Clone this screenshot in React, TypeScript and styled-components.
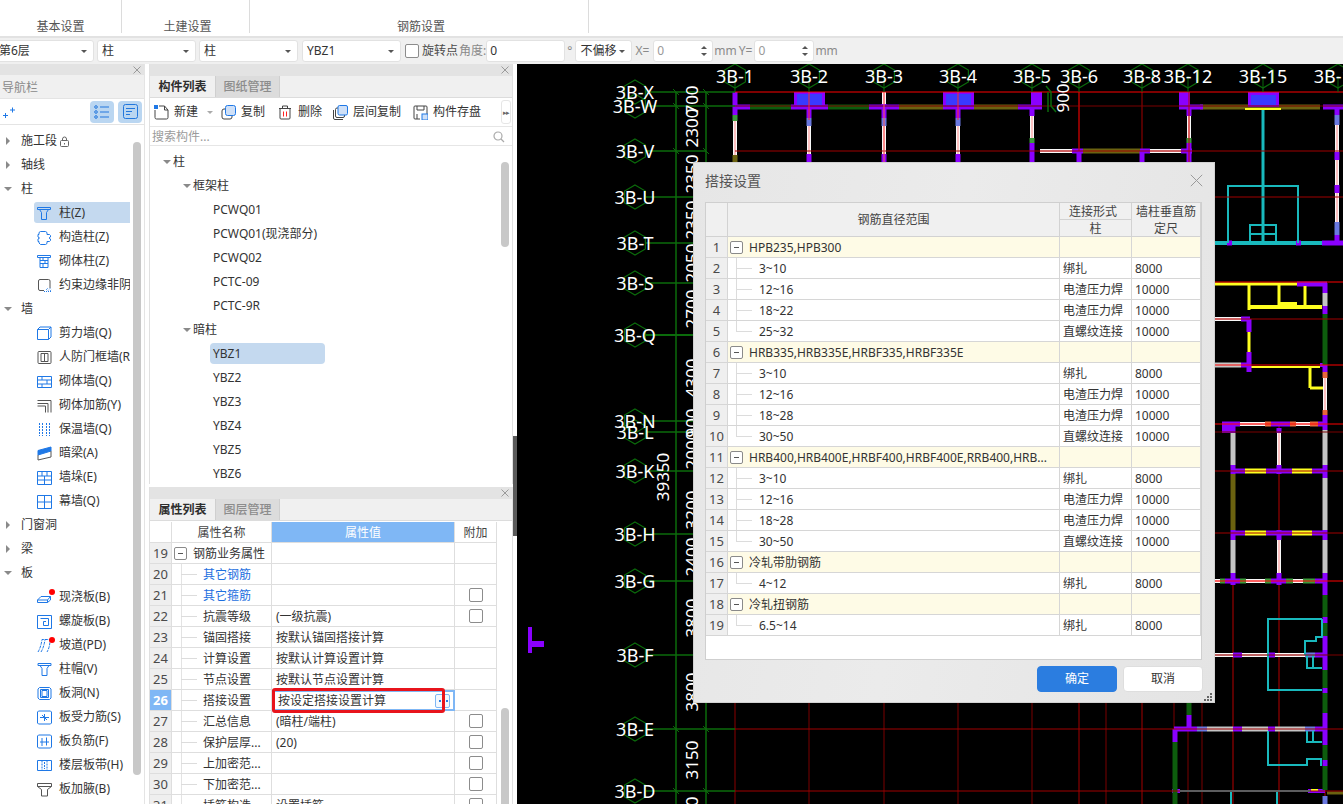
import React from "react";
import styled, { createGlobalStyle } from "styled-components";

const Global = createGlobalStyle`
  html, body { margin: 0; padding: 0; background: #fff; overflow: hidden; }
  #root { width: 1343px; height: 804px; }
  * { box-sizing: border-box; }
`;

const FONT = `"Noto Sans", "Noto Sans CJK SC", sans-serif`;
const BLUE = "#1f78e6";
const GREY = "#555";

/* ---------- shell ---------- */
const Page = styled.div`
  position: relative;
  width: 1343px;
  height: 804px;
  overflow: hidden;
  display: flex;
  flex-direction: column;
  font: 12px/1 ${FONT};
  color: #333;
  background: #fff;
`;
const Ribbon = styled.div`
  height: 38px;
  display: grid;
  grid-template-columns: 122px 128px 339px;
  background: #fff;
  border-bottom: 2px solid #e2e2e2;
`;
const RibbonGroup = styled.div<{ $shift: number }>`
  height: 33px;
  border-right: 1px solid #dcdcdc;
  display: flex;
  align-items: flex-end;
  justify-content: center;
  color: #555;
  padding-left: ${(p) => p.$shift}px;
  line-height: 12px;
`;
const Toolbar = styled.div`
  height: 26px;
  display: flex;
  align-items: center;
  background: #f0f0f0;
  color: #555;
`;
const Select = styled.div<{ $w: number; $ml?: number }>`
  width: ${(p) => p.$w}px;
  height: 22px;
  margin-left: ${(p) => p.$ml ?? 0}px;
  padding: 0 4px;
  display: flex;
  align-items: center;
  justify-content: space-between;
  background: #fff;
  border: 1px solid #e2e2e2;
  border-radius: 3px;
  color: #333;
  font-size: 12px;
`;
const Caret = styled.i<{ $ml?: number; $light?: boolean }>`
  width: 0;
  height: 0;
  margin-right: 2px;
  margin-left: ${(p) => p.$ml ?? 0}px;
  border-left: 3px solid transparent;
  border-right: 3px solid transparent;
  border-top: 3px solid ${(p) => (p.$light ? "#aaa" : "#555")};
`;
const CheckBox = styled.span<{ $ml?: number }>`
  display: inline-block;
  width: 14px;
  height: 14px;
  margin-left: ${(p) => p.$ml ?? 0}px;
  background: #fff;
  border: 1px solid #8c8c8c;
  border-radius: 2px;
  flex: none;
`;
const Label = styled.span<{ $ml?: number; $muted?: boolean }>`
  margin-left: ${(p) => p.$ml ?? 0}px;
  color: ${(p) => (p.$muted ? "#8a8a8a" : "#4a4a4a")};
  white-space: nowrap;
`;
const NumInput = styled.div<{ $w: number; $ml?: number; $muted?: boolean }>`
  width: ${(p) => p.$w}px;
  height: 22px;
  margin-left: ${(p) => p.$ml ?? 0}px;
  padding: 0 3px;
  display: flex;
  align-items: center;
  justify-content: space-between;
  background: #fff;
  border: 1px solid #e2e2e2;
  border-radius: 3px;
  color: ${(p) => (p.$muted ? "#999" : "#333")};
`;
const Spin = styled.span`
  display: flex;
  flex-direction: column;
  gap: 4px;
  margin-right: 2px;
  &::before, &::after {
    content: "";
    width: 0;
    height: 0;
    border-left: 3px solid transparent;
    border-right: 3px solid transparent;
  }
  &::before { border-bottom: 3px solid #555; }
  &::after { border-top: 3px solid #555; }
`;
const Main = styled.div`
  flex: 1;
  min-height: 0;
  display: flex;
  background: #fff;
`;

/* ---------- side panels ---------- */
const CloseStrip = styled.div<{ $h?: number }>`
  height: ${(p) => p.$h ?? 11}px;
  flex: none;
  background: #e3e3e3;
  display: flex;
  align-items: center;
  justify-content: flex-end;
  padding-right: 3px;
  color: #9a9a9a;
`;
const NavPanel = styled.aside`
  position: relative;
  width: 145px;
  flex: none;
  display: flex;
  flex-direction: column;
  border-right: 1px solid #e4e4e4;
  overflow: hidden;
`;
const NavTitle = styled.div`
  height: 23px;
  flex: none;
  display: flex;
  align-items: center;
  padding: 2px 0 0 2px;
  background: #f0f0f0;
  color: #8a8a8a;
`;
const NavTools = styled.div`
  height: 27px;
  flex: none;
  display: flex;
  align-items: center;
  gap: 4px;
  padding: 0 2px;
  border-top: 1px solid #e4e4e4;
  border-bottom: 1px solid #e4e4e4;
`;
const ToolToggle = styled.div`
  width: 24px;
  height: 22px;
  display: flex;
  align-items: center;
  justify-content: center;
  background: #bad6f1;
  border-radius: 4px;
`;
const Spacer = styled.div`
  flex: 1;
`;
const NavTree = styled.div`
  padding-top: 4px;
`;
const NavRow = styled.div`
  height: 24px;
  display: flex;
  align-items: center;
  white-space: nowrap;
  overflow: hidden;
  width: 131px;
`;
const Arrow = styled.i<{ $open?: boolean; $ml: number }>`
  flex: none;
  margin-left: ${(p) => p.$ml}px;
  width: 0;
  height: 0;
  ${(p) =>
    p.$open
      ? `border-left:4px solid transparent;border-right:4px solid transparent;border-top:4px solid #8a8a8a;`
      : `border-top:4px solid transparent;border-bottom:4px solid transparent;border-left:4px solid #8a8a8a;margin-left:${p.$ml + 2}px;margin-right:2px;`}
`;
const NavGroupText = styled.span`
  margin-left: 9px;
`;
const LockIcon = styled.svg`
  margin-left: 3px;
`;
const NavItem = styled.div<{ $active?: boolean }>`
  position: relative;
  height: 24px;
  width: 130px;
  display: flex;
  align-items: center;
  white-space: nowrap;
  overflow: hidden;
  padding-left: 37px;
  &::before {
    content: "";
    position: absolute;
    left: 34px;
    top: 1px;
    bottom: 2px;
    right: 0;
    border-radius: 3px 0 0 3px;
    background: ${(p) => (p.$active ? "#c4d9ef" : "transparent")};
  }
  & > * { position: relative; }
`;
const NavText = styled.span`
  margin-left: 7px;
`;
const Dot = styled.i`
  position: absolute;
  left: 12px;
  top: -1px;
  width: 6px;
  height: 6px;
  border-radius: 50%;
  background: #f00;
`;
const IconWrap = styled.span`
  position: relative;
  width: 15px;
  height: 15px;
  flex: none;
  display: block;
  svg { display: block; }
`;
const ScrollThumb = styled.i<{ $l: number; $t: number; $h: number }>`
  position: absolute;
  left: ${(p) => p.$l}px;
  top: ${(p) => p.$t}px;
  width: 8px;
  height: ${(p) => p.$h}px;
  border-radius: 4px;
  background: #c8c8c8;
`;

const MidColumn = styled.div`
  position: relative;
  width: 364px;
  flex: none;
  margin-left: 4px;
  display: flex;
  flex-direction: column;
  gap: 3px;
`;
const Panel = styled.section<{ $h?: number }>`
  position: relative;
  ${(p) => (p.$h ? `height:${p.$h}px;flex:none;` : "flex:1;min-height:0;")}
  display: flex;
  flex-direction: column;
  overflow: hidden;
  border-left: 1px solid #e0e0e0;
  border-right: 1px solid #e0e0e0;
`;
const TabRow = styled.div`
  height: 22px;
  flex: none;
  display: flex;
  background: #f0f0f0;
  border-bottom: 1px solid #dcdcdc;
`;
const Tab = styled.div<{ $active?: boolean }>`
  width: 65px;
  display: flex;
  align-items: center;
  justify-content: center;
  padding-top: 1px;
  background: ${(p) => (p.$active ? "#f0f0f0" : "#dcdcdc")};
  color: ${(p) => (p.$active ? "#2e2e2e" : "#8c8c8c")};
  font-weight: ${(p) => (p.$active ? 700 : 500)};
  ${(p) => (p.$active ? "" : "border-left:1px solid #cfcfcf;border-right:1px solid #cfcfcf;")}
`;
const ComponentTools = styled.div`
  height: 29px;
  flex: none;
  display: flex;
  align-items: center;
  padding-left: 4px;
  border-bottom: 1px solid #e6e6e6;
`;
const ToolBtn = styled.div<{ $ml?: number }>`
  display: flex;
  align-items: center;
  gap: 5px;
  margin-left: ${(p) => p.$ml ?? 0}px;
  color: #333;
  white-space: nowrap;
`;
const MoreBtn = styled.div`
  width: 10px;
  height: 24px;
  margin-left: 20px;
  display: flex;
  align-items: center;
  justify-content: center;
  border: 1px solid #e6e6e6;
  border-radius: 3px;
  color: #666;
  font-size: 7px;
  letter-spacing: -1px;
`;
const Search = styled.div`
  height: 19px;
  flex: none;
  display: flex;
  align-items: center;
  justify-content: space-between;
  padding: 1px 7px 0 2px;
  color: #9b9b9b;
  border-bottom: 1px solid #e6e6e6;
`;
const ComponentTree = styled.div`
  padding-top: 4px;
`;
const TreeRow = styled.div<{ $indent: number }>`
  height: 24px;
  display: flex;
  align-items: center;
  padding-left: ${(p) => p.$indent}px;
`;
const TreeLabel = styled.span`
  margin-left: 2px;
`;
const LeafRow = styled.div<{ $selected?: boolean }>`
  height: 24px;
  display: flex;
  align-items: center;
  padding-left: 63px;
  position: relative;
  &::before {
    content: "";
    position: absolute;
    left: 60px;
    top: 1px;
    bottom: 2px;
    width: 115px;
    border-radius: 4px;
    background: ${(p) => (p.$selected ? "#c4d9ef" : "transparent")};
  }
  & > span { position: relative; }
`;

/* ---------- property table ---------- */
const PropGrid = styled.div`
  width: 347px;
  display: grid;
  grid-template-columns: 22px 100px 183px 42px;
  grid-auto-rows: 21px;
  margin-top: 1px;
`;
const Cell = styled.div`
  display: flex;
  align-items: center;
  padding: 1px 0 0 4px;
  border-right: 1px solid #dedede;
  border-bottom: 1px solid #dedede;
  white-space: nowrap;
  overflow: hidden;
  color: #333;
`;
const HeadCell = styled(Cell)<{ $on?: boolean }>`
  justify-content: center;
  padding: 1px 0 0;
  background: ${(p) => (p.$on ? "#7fb7f5" : "#fff")};
  color: ${(p) => (p.$on ? "#fff" : "#444")};
`;
const NumCell = styled(Cell)<{ $on?: boolean }>`
  justify-content: center;
  padding: 1px 0 0;
  font-size: 13px;
  background: ${(p) => (p.$on ? "#7fb7f5" : "#efefef")};
  color: ${(p) => (p.$on ? "#fff" : "#4a4a4a")};
  font-weight: ${(p) => (p.$on ? 700 : 400)};
`;
const NameCell = styled(Cell)<{ $link?: boolean }>`
  position: relative;
  padding-left: 31px;
  color: ${(p) => (p.$link ? "#1d6fe0" : "#333")};
  &::before {
    content: "";
    position: absolute;
    left: 9px;
    top: 0;
    bottom: 0;
    width: 1px;
    background: #e3e3e3;
  }
  &::after {
    content: "";
    position: absolute;
    left: 9px;
    top: 10px;
    width: 16px;
    height: 1px;
    background: #dcdcdc;
  }
`;
const GroupCell = styled(Cell)`
  padding-left: 2px;
  gap: 6px;
`;
const MinusBox = styled.span`
  flex: none;
  width: 13px;
  height: 13px;
  display: flex;
  align-items: center;
  justify-content: center;
  background: #fff;
  border: 1px solid #8a8a8a;
  border-radius: 2px;
  &::before {
    content: "";
    width: 5px;
    height: 1px;
    background: #555;
  }
`;
const AddCell = styled(Cell)`
  padding: 0;
  justify-content: center;
`;
const EditCell = styled(Cell)`
  position: relative;
  border: 2px solid #7fb7f5;
  padding: 1px 3px 0 4px;
  overflow: visible;
  justify-content: space-between;
`;
const DotsBtn = styled.span`
  position: relative;
  width: 15px;
  height: 14px;
  display: flex;
  align-items: center;
  justify-content: center;
  background: #f3f8fe;
  border: 1px solid #7fb7f5;
  border-radius: 2px;
  &::before {
    content: "";
    width: 2px;
    height: 2px;
    margin-left: -6px;
    background: #2a7de0;
    box-shadow: 7px 0 0 #2a7de0;
  }
`;
const RedMark = styled.i`
  position: absolute;
  left: -2px;
  top: -4px;
  width: 173px;
  height: 25px;
  border: 3px solid #e8141c;
  border-radius: 3px;
  pointer-events: none;
`;
const Splitter = styled.i`
  position: absolute;
  left: 513px;
  top: 436px;
  width: 4px;
  height: 100px;
  background: #5a5a5a;
`;

/* ---------- canvas ---------- */
const Canvas = styled.main`
  flex: 1;
  margin-left: 4px;
  background: #000;
  overflow: hidden;
  svg { display: block; }
`;

/* ---------- dialog ---------- */
const Dialog = styled.div`
  position: absolute;
  left: 693px;
  top: 162px;
  width: 522px;
  height: 541px;
  padding: 0 12px;
  display: flex;
  flex-direction: column;
  background: linear-gradient(100deg, #e6e6e6, #ebebeb 45%, #e4e4e4);
  border: 1px solid #d2d2d2;
  z-index: 2;
`;
const DialogHead = styled.div`
  height: 39px;
  flex: none;
  margin: 0 -1px;
  padding-bottom: 4px;
  display: flex;
  align-items: center;
  justify-content: space-between;
  color: #555;
  font-size: 14px;
`;
const DialogClose = styled.span`
  color: #9a9a9a;
  display: flex;
`;
const DialogBody = styled.div`
  height: 458px;
  flex: none;
  background: #fff;
  border: 1px solid #cfcfcf;
  margin-left: -1px;
`;
const RebarHead = styled.div`
  display: grid;
  grid-template-columns: 22px 332px 72px 69px;
  grid-template-rows: 17px 17px;
  background: #f0f0f0;
`;
const RebarHeadCell = styled.div<{ $area: string; $noLine?: boolean; $pr?: number }>`
  grid-area: ${(p) => p.$area};
  display: flex;
  align-items: center;
  justify-content: center;
  padding: 1px ${(p) => p.$pr ?? 0}px 0 0;
  color: #444;
  border-right: 1px solid #d2d2d2;
  border-bottom: ${(p) => (p.$noLine ? "none" : "1px solid #d2d2d2")};
`;
const RebarRow = styled.div<{ $group?: boolean }>`
  height: 21px;
  display: grid;
  grid-template-columns: 22px 332px 72px 69px;
  background: ${(p) => (p.$group ? "#fefbe6" : "#fff")};
  border-bottom: 1px solid #d6d6d6;
  &:first-of-type { border-top: 1px solid #d2d2d2; }
`;
const RebarNum = styled.div`
  display: flex;
  align-items: center;
  justify-content: center;
  padding-top: 1px;
  background: #efefef;
  border-right: 1px solid #d6d6d6;
  font-size: 13px;
  color: #4a4a4a;
`;
const RebarCell = styled.div`
  display: flex;
  align-items: center;
  padding: 1px 0 0 3px;
  border-right: 1px solid #d6d6d6;
  white-space: nowrap;
  overflow: hidden;
  font-size: 12px;
`;
const RebarGroup = styled(RebarCell)`
  padding-left: 2px;
  gap: 6px;
  overflow: visible;
`;
const RebarChild = styled(RebarCell)<{ $last?: boolean }>`
  position: relative;
  padding-left: 31px;
  &::before {
    content: "";
    position: absolute;
    left: 8px;
    top: 0;
    height: ${(p) => (p.$last ? "10px" : "100%")};
    width: 1px;
    background: #dcdcdc;
  }
  &::after {
    content: "";
    position: absolute;
    left: 8px;
    top: 10px;
    width: 16px;
    height: 1px;
    background: #dcdcdc;
  }
`;
const DialogFoot = styled.div`
  flex: 1;
  position: relative;
  display: flex;
  justify-content: flex-end;
  align-items: flex-start;
  gap: 6px;
  padding-top: 6px;
  margin-right: -1px;
`;
const Btn = styled.div<{ $primary?: boolean }>`
  width: 80px;
  height: 26px;
  display: flex;
  align-items: center;
  justify-content: center;
  border-radius: 4px;
  background: ${(p) => (p.$primary ? "#2b7de0" : "#fff")};
  color: ${(p) => (p.$primary ? "#fff" : "#333")};
  border: 1px solid ${(p) => (p.$primary ? "#2b7de0" : "#dedede")};
`;
const Grip = styled.svg`
  position: absolute;
  right: -10px;
  bottom: 0;
`;

/* ---------- icons ---------- */
const Svg: React.FC<{ children: React.ReactNode }> = ({ children }) => (
  <svg width={15} height={15} viewBox="0 0 15 15" fill="none" stroke={BLUE} strokeWidth="1">
    {children}
  </svg>
);
const CloseX: React.FC<{ size?: number }> = ({ size = 8 }) => (
  <svg width={size} height={size} viewBox="0 0 8 8" stroke="currentColor" strokeWidth={8 / size}>
    <path d="M.5.5l7 7M7.5.5l-7 7" />
  </svg>
);
const navIcons: Record<string, React.ReactNode> = {
  column: <path d="M.5 1.500h13v2H.5zM2.500 3.500l2 3v7h5v-7l2-3" />,
  structure: <path d="M3.500 1.500h5l1.500 1v2h2.500l1 1v1.500l-1.500 1 1.500 1v1.500l-1 1H10v2l-1.500 1h-5L2 13v-1.500H1V9l1.500-1L1 7V4.500h1V2.500z" />,
  brickCol: <path d="M.5 1.500h13v2H.5zM3 3.500v10h8v-10M3 6.500h8M3 9.500h8M6 3.500v3M8 6.500v3M6 9.500v4" />,
  constraint: (
    <>
      <path d="M1.500 3q0-1.500 1.500-1.500h8.500q1.500 0 1.500 1.500v7M1.500 3v8q0 1.500 1.500 1.500h4" stroke={GREY} />
      <path d="M7 13.500h7.500M9 12l2-2M11 12.500l3-3M13 13l1.500-1.500" strokeDasharray="1 1" />
    </>
  ),
  shear: <path d="M.5 3.500h11v10H.5zM.5 3.500l2.500-2.500h11v10l-2.500 2.500M14 1l-2.500 2.500" />,
  civil: (
    <g stroke={GREY}>
      <rect x="1" y="1.500" width="13" height="12" rx="1" />
      <path d="M4 3.500v8M7.500 3.500v8M11 3.500v8M4 3.500h7M4 11.500h7" />
    </g>
  ),
  brickWall: <path d="M.5 2.500h14v11H.5zM.5 6h14M.5 10h14M5 2.500V6M10 6v4M5 10v3.500" />,
  brickRebar: <path d="M.5 2.500h13.500v12M.5 5.500h10.500v9M.5 8h8v6.500" stroke={GREY} />,
  insulate: <path d="M2.500 1v13M12.500 1v13M5.500 1v13M9.500 1v13" strokeDasharray="2 1" />,
  darkBeam: (
    <>
      <path d="M1 4.500L14 1v4L1 9z" fill={BLUE} />
      <path d="M1 9v5l13-3V5" stroke={GREY} />
    </>
  ),
  pier: <path d="M.5 1.500h14v13H.5zM.5 6h14M.5 10h14M5 1.500V6M10 1.500V6M7.500 6v8.500" />,
  curtain: <path d="M.5 1.500h14v13H.5zM.5 8h14M7.500 1.500v13" />,
  slab: <path d="M.5 10h10l3-3.500H4L.5 10v2.500h10l3-2.500V6.500M10.500 10v2.500" />,
  spiral: <path d="M.5 1.500h14v13H.5zM3.500 4.500h8v7h-5v-4h2.500" />,
  ramp: <path d="M1 14Q4 9 5 1.500h8Q13 9 10 14M4 14q3-5 4-12.500" strokeDasharray="3 1" />,
  cap: <path d="M1 1.500h13v2H1zM3 3.500l2 3v7h5v-7l2-3" />,
  hole: <path d="M2.500 1.500h10l1.500 1.500v9l-1.500 1.500h-10L1 12V3zM5 4.500h5v6H5zM3.500 3.500h8v8h-8z" />,
  stress: <path d="M1.500 1h12l1 1v11l-1 1h-12l-1-1V2zM3 7.500h9M7.500 4v7M5 5l5 5" />,
  negative: <path d="M1.500 1h12l1 1v11l-1 1h-12l-1-1V2zM5 4v8M9.500 3.500v8M3 8h9" />,
  band: (
    <>
      <path d="M.5 2.500h14v10H.5z" />
      <path d="M5 2.500v10M10 2.500v10M7.500 4v7" strokeDasharray="2 1" />
    </>
  ),
  haunch: <path d="M.5 1.500h14v3H.5zM.5 4.500l4 3v6.500h6V7.500l4-3" stroke={GREY} />,
};
const Ico: React.FC<{ name: string; dot?: boolean }> = ({ name, dot }) => (
  <IconWrap>
    <Svg>{navIcons[name]}</Svg>
    {dot && <Dot />}
  </IconWrap>
);

const navData: Array<
  | { g: string; open?: boolean; lock?: boolean }
  | { t: string; i: string; active?: boolean; dot?: boolean }
> = [
  { g: "施工段", lock: true },
  { g: "轴线" },
  { g: "柱", open: true },
  { t: "柱(Z)", i: "column", active: true },
  { t: "构造柱(Z)", i: "structure" },
  { t: "砌体柱(Z)", i: "brickCol" },
  { t: "约束边缘非阴影区", i: "constraint" },
  { g: "墙", open: true },
  { t: "剪力墙(Q)", i: "shear" },
  { t: "人防门框墙(RF)", i: "civil" },
  { t: "砌体墙(Q)", i: "brickWall" },
  { t: "砌体加筋(Y)", i: "brickRebar" },
  { t: "保温墙(Q)", i: "insulate" },
  { t: "暗梁(A)", i: "darkBeam" },
  { t: "墙垛(E)", i: "pier" },
  { t: "幕墙(Q)", i: "curtain" },
  { g: "门窗洞" },
  { g: "梁" },
  { g: "板", open: true },
  { t: "现浇板(B)", i: "slab", dot: true },
  { t: "螺旋板(B)", i: "spiral" },
  { t: "坡道(PD)", i: "ramp", dot: true },
  { t: "柱帽(V)", i: "cap" },
  { t: "板洞(N)", i: "hole" },
  { t: "板受力筋(S)", i: "stress" },
  { t: "板负筋(F)", i: "negative" },
  { t: "楼层板带(H)", i: "band" },
  { t: "板加腋(B)", i: "haunch" },
];

const tools = [
  {
    t: "新建",
    ml: 0,
    icon: (
      <>
        <path d="M1 5v7.500q0 1.500 1.500 1.500h10q1.500 0 1.500-1.500V5l-3.500-4H5" stroke="#444" />
        <path d="M10.500 1v4H14" stroke="#444" />
        <rect x="0" y="0" width="4" height="4" fill={BLUE} stroke="none" />
      </>
    ),
  },
  {
    t: "复制",
    ml: 6,
    icon: (
      <>
        <rect x="1" y="4" width="10" height="10" rx="2" stroke="#444" />
        <rect x="4.500" y=".5" width="10" height="10" rx="2" fill="#cfe0f7" />
      </>
    ),
  },
  {
    t: "删除",
    ml: 13,
    icon: (
      <>
        <path d="M1 3.500h12M4.500 3.500V1h5v2.500M2 3.500V13q0 1 1 1h8q1 0 1-1V3.500" stroke="#444" />
        <path d="M5.500 6.500v5M8.500 6.500v5" stroke="#f22" />
      </>
    ),
  },
  {
    t: "层间复制",
    ml: 11,
    icon: (
      <>
        <path d="M.5 5v8q0 1.500 1.500 1.500h8" stroke="#444" />
        <rect x="2.500" y="3" width="9" height="9.500" rx="1.500" stroke="#444" />
        <rect x="5" y=".5" width="9.500" height="9.500" rx="1.500" fill="#cfe0f7" />
      </>
    ),
  },
  {
    t: "构件存盘",
    ml: 12,
    icon: (
      <>
        <path d="M7 14H2q-1 0-1-1V2q0-1 1-1h11q1 0 1 1v7" stroke="#444" />
        <path d="M4 1v4h7V1M4 14v-5" stroke="#444" />
        <rect x="9" y="9" width="6" height="6" fill="#cfe0f7" />
      </>
    ),
  },
];

/* ---------- property rows ---------- */
const props: Array<{ n: number; name: string; val?: string; check?: boolean; link?: boolean }> = [
  { n: 20, name: "其它钢筋", link: true },
  { n: 21, name: "其它箍筋", link: true, check: true },
  { n: 22, name: "抗震等级", val: "(一级抗震)", check: true },
  { n: 23, name: "锚固搭接", val: "按默认锚固搭接计算" },
  { n: 24, name: "计算设置", val: "按默认计算设置计算" },
  { n: 25, name: "节点设置", val: "按默认节点设置计算" },
  { n: 26, name: "搭接设置", val: "按设定搭接设置计算" },
  { n: 27, name: "汇总信息", val: "(暗柱/端柱)", check: true },
  { n: 28, name: "保护层厚...", val: "(20)", check: true },
  { n: 29, name: "上加密范...", check: true },
  { n: 30, name: "下加密范...", check: true },
  { n: 31, name: "插筋构造", val: "设置插筋", check: true },
];

/* ---------- rebar rows ---------- */
const J = "绑扎";
const D = "电渣压力焊";
const Z = "直螺纹连接";
type Rebar = { g?: string; r?: string; c?: string; v?: string; last?: boolean };
const rebar: Rebar[] = [
  { g: "HPB235,HPB300" },
  { r: "3~10", c: J, v: "8000" },
  { r: "12~16", c: D, v: "10000" },
  { r: "18~22", c: D, v: "10000" },
  { r: "25~32", c: Z, v: "10000", last: true },
  { g: "HRB335,HRB335E,HRBF335,HRBF335E" },
  { r: "3~10", c: J, v: "8000" },
  { r: "12~16", c: D, v: "10000" },
  { r: "18~28", c: D, v: "10000" },
  { r: "30~50", c: Z, v: "10000", last: true },
  { g: "HRB400,HRB400E,HRBF400,HRBF400E,RRB400,HRB..." },
  { r: "3~10", c: J, v: "8000" },
  { r: "12~16", c: D, v: "10000" },
  { r: "18~28", c: D, v: "10000" },
  { r: "30~50", c: Z, v: "10000", last: true },
  { g: "冷轧带肋钢筋" },
  { r: "4~12", c: J, v: "8000", last: true },
  { g: "冷轧扭钢筋" },
  { r: "6.5~14", c: J, v: "8000", last: true },
];

/* ---------- CAD drawing ---------- */
const P = "#8a00ff";
const B = "#6a78e0";
const G = "#3b9a3b";
const DG = "#0d5d0d";
const OL = "#6b6210";
const Y = "#ffff20";
const C = "#19b9bd";
const W = "W";
const GR = "#c4c4c4";
const OR = "#e8663c";
const RED = "#ff0000";
const DR = "#a00000";
const VR = "#7a0000";
const GN = "#0b6b0b";

type Run = [number, number, string];
const H: Array<[number, number, Run[]]> = [
  [107, 5, [[750, 791, DG], [828, 869, DG], [899, 943, OL], [974, 1018, OL], [1200, 1320, OL]]],
  [107, 5, [[733, 750, P], [791, 828, P], [869, 899, P], [943, 974, P], [1018, 1042, P], [1179, 1203, P], [1323, 1343, P]]],
  [151, 5, [[1040, 1072, W], [1072, 1083, P], [1083, 1140, OL], [1140, 1150, P], [1150, 1181, W], [1181, 1192, P]]],
  [243, 4, [[1215, 1322, C]]],
  [243, 5, [[1227, 1232, P], [1296, 1301, P], [1322, 1343, P]]],
  [284, 3, [[1215, 1297, Y]]],
  [284, 5, [[1297, 1327, P]]],
  [307, 4, [[1250, 1322, Y]]],
  [305, 6, [[1280, 1297, Y]]],
  [319, 5, [[1215, 1241, W], [1241, 1250, P]]],
  [365, 5, [[1215, 1241, GR], [1241, 1250, P]]],
  [367, 2, [[1250, 1320, Y]]],
  [365, 4, [[1320, 1327, P]]],
  [388, 3, [[1310, 1323, Y]]],
  [424, 5, [[1222, 1240, P], [1240, 1265, W], [1265, 1271, OR], [1271, 1290, P], [1290, 1296, OR], [1296, 1310, W], [1310, 1318, OR], [1318, 1327, P]]],
  [429, 8, [[1222, 1232, P]]],
  [471, 5, [[1231, 1245, P], [1245, 1266, Y], [1266, 1292, P], [1292, 1312, Y], [1312, 1327, P]]],
  [533, 5, [[1231, 1245, P], [1245, 1266, Y], [1266, 1292, P], [1292, 1312, Y], [1312, 1327, P]]],
  [581, 5, [[1215, 1220, W], [1220, 1225, G], [1225, 1240, P], [1240, 1246, G], [1246, 1265, W], [1265, 1271, G], [1271, 1286, P], [1286, 1293, G], [1293, 1303, W], [1303, 1315, G], [1315, 1325, P]]],
  [655, 5, [[1215, 1233, W], [1233, 1242, P], [1242, 1267, W], [1267, 1275, P], [1275, 1305, W], [1305, 1315, B], [1315, 1325, P]]],
  [729, 5, [[1174, 1197, P], [1197, 1207, B], [1207, 1233, GR], [1233, 1242, P], [1242, 1268, GR], [1268, 1275, P], [1275, 1305, GR], [1305, 1315, B], [1315, 1325, P]]],
  [793, 3, [[1327, 1343, OL]]],
  [791, 4, [[1172, 1180, P], [1308, 1325, P]]],
  [790, 2, [[1311, 1318, Y]]],
];
const V: Array<[number, number, Run[]]> = [
  [735, 5, [[92, 115, P], [115, 121, G], [121, 155, W], [155, 162, OL]]],
  [809, 5, [[106, 118, P], [118, 126, B], [126, 154, W], [154, 162, P]]],
  [884, 5, [[92, 104, W], [104, 118, P], [118, 126, B], [126, 154, W], [154, 162, P]]],
  [958, 5, [[106, 118, P], [118, 126, B], [126, 154, W], [154, 162, P]]],
  [1032, 5, [[106, 116, P], [116, 138, W], [138, 143, G], [143, 162, P]]],
  [1079, 5, [[151, 162, P]]],
  [1142, 5, [[151, 162, P]]],
  [1189, 5, [[106, 116, P], [116, 138, W], [138, 143, G], [143, 162, P]]],
  [1337, 5, [[107, 115, P], [115, 125, B], [125, 152, W], [152, 160, P], [160, 185, W], [185, 193, P], [193, 222, W], [222, 235, B], [235, 245, P]]],
  [1263, 3, [[110, 243, C]]],
  [1249, 3, [[285, 310, Y], [332, 352, Y]]],
  [1249, 5, [[319, 332, P], [352, 372, P]]],
  [1279, 3, [[285, 308, Y]]],
  [1305, 3, [[286, 308, Y]]],
  [1310, 3, [[366, 388, Y]]],
  [1325, 5, [[283, 293, P], [293, 306, GR], [306, 314, P], [314, 365, DG], [365, 372, P], [372, 378, OR], [378, 410, W], [410, 415, OR], [415, 430, P], [430, 465, GR], [465, 478, P], [478, 530, GR], [530, 540, P], [540, 573, GR], [573, 595, P], [595, 617, DG], [617, 623, P], [623, 636, DG], [636, 670, P], [670, 688, DG], [688, 693, P], [693, 713, DG], [713, 745, P], [745, 760, DG], [760, 766, P], [766, 790, DG], [796, 804, B]]],
  [1233, 5, [[424, 433, P], [433, 465, GR], [465, 474, P], [474, 530, OL], [530, 540, P], [540, 573, GR], [573, 585, P]]],
  [1279, 5, [[428, 433, P], [433, 465, W], [465, 474, P], [530, 540, P], [540, 573, W], [573, 585, P]]],
  [1189, 5, [[703, 715, DG], [715, 729, P]]],
  [1175, 5, [[729, 742, P], [742, 804, DG]]],
];
const axisX: Array<[string, number]> = [
  ["3B-1", 735], ["3B-2", 809], ["3B-3", 884], ["3B-4", 958], ["3B-5", 1032],
  ["3B-6", 1079], ["3B-8", 1142], ["3B-12", 1188], ["3B-15", 1263], ["3B-16", 1338],
];
const axisY: Array<[string, number]> = [
  ["3B-X", 92], ["3B-W", 106], ["3B-V", 151], ["3B-U", 197], ["3B-T", 243], ["3B-S", 283], ["3B-Q", 335],
  ["3B-N", 421], ["3B-L", 432], ["3B-K", 471], ["3B-H", 534], ["3B-G", 581], ["3B-F", 655], ["3B-E", 729], ["3B-D", 791],
];
const dims: Array<[string, number, number]> = [
  ["700", 691, 100], ["2300", 691, 128], ["2350", 691, 174], ["2350", 691, 220], ["2050", 691, 263], ["2700", 691, 309],
  ["4300", 691, 378], ["900", 691, 423], ["2000", 691, 450], ["3200", 691, 510], ["2400", 691, 557], ["3800", 691, 618],
  ["3800", 691, 692], ["3150", 691, 760], ["2150", 691, 816], ["900", 1062, 98], ["39350", 662, 477],
];
const hex = (x: number, y: number, r = 12) => {
  const dx = r * 0.866;
  return `${x},${y - r} ${x + dx},${y - r / 2} ${x + dx},${y + r / 2} ${x},${y + r} ${x - dx},${y + r / 2} ${x - dx},${y - r / 2}`;
};
const line = (k: string, x1: number, y1: number, x2: number, y2: number, c: string, w = 1) => (
  <line key={k} x1={x1} y1={y1} x2={x2} y2={y2} stroke={c} strokeWidth={w} />
);

const runs = (horizontal: boolean, fixed: number, w: number, list: Run[], id: string) =>
  list.map(([a, b, c], i) => {
    const k = `${id}-${i}`;
    const mk = (col: string, wd: number, s: string) =>
      horizontal ? line(k + s, a, fixed, b, fixed, col, wd) : line(k + s, fixed, a, fixed, b, col, wd);
    return c === W ? (
      <g key={k}>
        {mk("#f8f8f8", w - 1, "a")}
        {mk("#ff8a8a", 1, "b")}
      </g>
    ) : (
      mk(c, w, "c")
    );
  });

const CadDrawing: React.FC = () => (
  <svg width="826" height="740" viewBox="517 64 826 740" fontFamily={`"Noto Sans", sans-serif`}>
    {[735, 809, 884, 958, 1032, 1106, 1174, 1188, 1202].map((x) => line(`v1-${x}`, x, 703, x, 804, x === 735 ? "#8a0000" : VR))}
    {[1079, 1142].map((x) => line(`v2-${x}`, x, 92, x, 804, "#a30000"))}
    {[1233, 1279, 1325].map((x) => line(`v3-${x}`, x, 424, x, 804, "#7a0000", 1.5))}
    {H.map(([y, w, l], i) => (
      <g key={`h${i}`}>{runs(true, y, w, l, `h${i}`)}</g>
    ))}
    {V.map(([x, w, l], i) => (
      <g key={`v${i}`}>{runs(false, x, w, l, `v${i}`)}</g>
    ))}
    <rect x="794" y="92" width="31" height="13" fill={P} />
    <rect x="797" y="94" width="25" height="11" fill="#3a3aff" />
    <rect x="943" y="92" width="31" height="13" fill={P} />
    <rect x="946" y="94" width="25" height="11" fill="#3a3aff" />
    <rect x="1031" y="92" width="11" height="14" fill={P} />
    <rect x="1179" y="92" width="11" height="14" fill={P} />
    <rect x="1248" y="92" width="31" height="15" fill={P} />
    <rect x="1251" y="95" width="25" height="10" fill="#3a3aff" />
    <rect x="1245" y="108" width="36" height="2" fill={Y} />
    <g fill="none" stroke={C} strokeWidth="2">
      <path d="M1228 243V186h70v57" />
      <path d="M1250 243v-18h26v18M1250 234h26" />
      <path d="M1322 619h-54v71h54M1322 619v18h-6v4h-11v14M1307 655v13h15M1313 655v13" />
      <path d="M1268 731v34h39v-6h14v7" />
      <path d="M1307 731v11h15M1313 731v11" />
      <path d="M1180 791h130M1231 791v13M1277 791v13" />
    </g>
    {line("r92", 735, 92, 1343, 92, RED)}
    {line("r106", 735, 106, 1343, 106, VR)}
    {line("r151", 735, 151, 1343, 151, DR)}
    {([[197, DR], [282, RED], [319, DR], [365, RED], [424, RED], [432, VR], [471, DR], [533, DR], [581, RED], [655, VR], [729, DR], [791, DR]] as Array<[number, string]>).map(([y, c]) =>
      line(`rh${y}`, y === 729 || y === 791 ? 735 : 1215, y, 1343, y, c)
    )}
    {line("x1079a", 1079, 92, 1079, 151, "#c00000")}
    {line("x1189a", 1189, 92, 1189, 162, "#c00000")}
    {line("x809a", 809, 92, 809, 120, "#ff2a2a")}
    {line("x884a", 884, 92, 884, 162, "#ff5a5a")}
    {line("x958a", 958, 92, 958, 120, "#ff2a2a")}
    {line("gv1", 676, 92, 676, 804, GN, 1.5)}
    {line("gv2", 706, 92, 706, 170, GN, 1.5)}
    {line("gv3", 706, 700, 706, 804, GN, 1.5)}
    {axisY.map(([, y]) => line(`gy${y}`, 646, y, y === 92 || y === 106 || y >= 729 ? 735 : 706, y, GN, y === 335 ? 2 : 1.5))}
    {[92, 106, 151, 729, 791].map((y) => (
      <path key={`tick${y}`} d={`M703 ${y - 3}l6 6M673 ${y - 3}l6 6`} stroke={GN} />
    ))}
    {axisX.map(([, x]) => line(`gx${x}`, x, 76, x, 92, GN, 1))}
    <path d="M1046 86l5 6v14l5 6M1048 92v20" stroke={GN} strokeWidth="1.500" fill="none" />
    {axisX.map(([, x]) => (
      <polygon key={`hx${x}`} points={hex(x, 76)} fill="none" stroke={GN} strokeWidth="1.200" />
    ))}
    {axisY.map(([, y]) => (
      <polygon key={`hy${y}`} points={hex(635, y)} fill="none" stroke={GN} strokeWidth="1.200" />
    ))}
    <path d="M528 627h4v14h12v6h-12v6h-4z" fill={P} />
    <g fill="#fff" fontSize="18" textAnchor="middle" dominantBaseline="central">
      {axisX.map(([t, x]) => (
        <text key={t} x={x} y={76}>{t}</text>
      ))}
      {axisY.map(([t, y]) => (
        <text key={t} x={635} y={y}>{t}</text>
      ))}
    </g>
    <g fill="#fff" fontSize="17" textAnchor="middle" dominantBaseline="central">
      {dims.map(([t, x, y], i) => (
        <text key={i} x={x} y={y} transform={`rotate(-90 ${x} ${y})`}>{t}</text>
      ))}
    </g>
  </svg>
);

/* ---------- page ---------- */
const App: React.FC = () => (
  <>
    <Global />
    <Page>
      <Ribbon>
        <RibbonGroup $shift={0}>基本设置</RibbonGroup>
        <RibbonGroup $shift={4}>土建设置</RibbonGroup>
        <RibbonGroup $shift={4}>钢筋设置</RibbonGroup>
      </Ribbon>
      <Toolbar>
        <Select $w={100} $ml={-6}>第6层<Caret /></Select>
        <Select $w={99} $ml={3}>柱<Caret /></Select>
        <Select $w={99} $ml={3}>柱<Caret /></Select>
        <Select $w={99} $ml={4}>YBZ1<Caret /></Select>
        <CheckBox $ml={4} />
        <Label $ml={3}>旋转点</Label>
        <Label $ml={1} $muted>角度:</Label>
        <NumInput $w={79} $ml={0}>0</NumInput>
        <Label $ml={2} $muted>°</Label>
        <Select $w={57} $ml={3}>不偏移<Caret /></Select>
        <Label $ml={3} $muted>X=</Label>
        <NumInput $w={60} $ml={4} $muted>0<Spin /></NumInput>
        <Label $ml={1} $muted>mm</Label>
        <Label $ml={2} $muted>Y=</Label>
        <NumInput $w={60} $ml={2} $muted>0<Spin /></NumInput>
        <Label $ml={1} $muted>mm</Label>
      </Toolbar>
      <Main>
        <NavPanel>
          <CloseStrip><CloseX /></CloseStrip>
          <NavTitle>导航栏</NavTitle>
          <NavTools>
            <svg width="14" height="14" viewBox="0 0 14 14" stroke={BLUE} fill="none">
              <path d="M1 10.500h5M3.500 8v5M8 5h5M10.500 2.500v5" />
            </svg>
            <Spacer />
            <ToolToggle>
              <svg width="16" height="14" viewBox="0 0 16 14" stroke="#2277dd" fill="none">
                <path d="M6 2h9M6 7h9M6 12h9" />
                <circle cx="2" cy="2" r="1.300" />
                <circle cx="2" cy="7" r="1.300" />
                <circle cx="2" cy="12" r="1.300" />
              </svg>
            </ToolToggle>
            <ToolToggle>
              <svg width="15" height="15" viewBox="0 0 15 15" stroke="#2277dd" fill="none">
                <rect x=".5" y=".5" width="14" height="14" rx="2" />
                <path d="M3 4.500h9M3 7.500h6M3 10.500h4" />
              </svg>
            </ToolToggle>
          </NavTools>
          <NavTree>
            {navData.map((d, i) =>
              "g" in d ? (
                <NavRow key={i}>
                  <Arrow $open={d.open} $ml={4} />
                  <NavGroupText>{d.g}</NavGroupText>
                  {d.lock && (
                    <LockIcon width="10" height="11" viewBox="0 0 10 11" fill="none" stroke="#666">
                      <rect x=".5" y="4.500" width="8" height="6" rx="1" />
                      <path d="M2.500 4.500V3q0-2 2-2t2 2v1.500M4.500 7v1.500" />
                    </LockIcon>
                  )}
                </NavRow>
              ) : (
                <NavItem key={i} $active={d.active}>
                  <Ico name={d.i} dot={d.dot} />
                  <NavText>{d.t}</NavText>
                </NavItem>
              )
            )}
          </NavTree>
          <ScrollThumb $l={133} $t={78} $h={633} />
        </NavPanel>

        <MidColumn>
          <Panel $h={420}>
            <CloseStrip $h={12}><CloseX /></CloseStrip>
            <TabRow>
              <Tab $active>构件列表</Tab>
              <Tab>图纸管理</Tab>
            </TabRow>
            <ComponentTools>
              {tools.map((t) => (
                <ToolBtn key={t.t} $ml={t.ml}>
                  <svg width="15" height="15" viewBox="0 0 15 15" fill="none" stroke={BLUE}>{t.icon}</svg>
                  {t.t}
                  {t.t === "新建" && <Caret $ml={4} $light />}
                </ToolBtn>
              ))}
              <MoreBtn>▸▸</MoreBtn>
            </ComponentTools>
            <Search>
              搜索构件...
              <svg width="12" height="12" viewBox="0 0 12 12" fill="none" stroke="#aaa" strokeWidth="1.200">
                <circle cx="5" cy="5" r="4" />
                <path d="M8 8l3 3" />
              </svg>
            </Search>
            <ComponentTree>
              <TreeRow $indent={13}><Arrow $open $ml={0} /><TreeLabel>柱</TreeLabel></TreeRow>
              <TreeRow $indent={33}><Arrow $open $ml={0} /><TreeLabel>框架柱</TreeLabel></TreeRow>
              {["PCWQ01", "PCWQ01(现浇部分)", "PCWQ02", "PCTC-09", "PCTC-9R"].map((t) => (
                <LeafRow key={t}><span>{t}</span></LeafRow>
              ))}
              <TreeRow $indent={33}><Arrow $open $ml={0} /><TreeLabel>暗柱</TreeLabel></TreeRow>
              {["YBZ1", "YBZ2", "YBZ3", "YBZ4", "YBZ5", "YBZ6"].map((t, i) => (
                <LeafRow key={t} $selected={i === 0}><span>{t}</span></LeafRow>
              ))}
            </ComponentTree>
            <ScrollThumb $l={351} $t={98} $h={85} />
          </Panel>
          <Panel>
            <CloseStrip $h={12}><CloseX /></CloseStrip>
            <TabRow>
              <Tab $active>属性列表</Tab>
              <Tab>图层管理</Tab>
            </TabRow>
            <PropGrid>
              <HeadCell />
              <HeadCell>属性名称</HeadCell>
              <HeadCell $on>属性值</HeadCell>
              <HeadCell>附加</HeadCell>
              <NumCell>19</NumCell>
              <GroupCell><MinusBox />钢筋业务属性</GroupCell>
              <Cell />
              <Cell />
              {props.map((r) => (
                <React.Fragment key={r.n}>
                  <NumCell $on={r.n === 26}>{r.n}</NumCell>
                  <NameCell $link={r.link}>{r.name}</NameCell>
                  {r.n === 26 ? (
                    <EditCell>
                      {r.val}
                      <DotsBtn />
                      <RedMark />
                    </EditCell>
                  ) : (
                    <Cell>{r.val}</Cell>
                  )}
                  <AddCell>{r.check && <CheckBox />}</AddCell>
                </React.Fragment>
              ))}
            </PropGrid>
            <ScrollThumb $l={351} $t={221} $h={120} />
          </Panel>
        </MidColumn>

        <Canvas>
          <CadDrawing />
        </Canvas>
      </Main>

      <Splitter />

      <Dialog>
        <DialogHead>
          搭接设置
          <DialogClose><CloseX size={13} /></DialogClose>
        </DialogHead>
        <DialogBody>
          <RebarHead>
            <RebarHeadCell $area="1 / 1 / 3 / 2" />
            <RebarHeadCell $area="1 / 2 / 3 / 3">钢筋直径范围</RebarHeadCell>
            <RebarHeadCell $area="1 / 3 / 2 / 4" $pr={5}>连接形式</RebarHeadCell>
            <RebarHeadCell $area="2 / 3 / 3 / 4">柱</RebarHeadCell>
            <RebarHeadCell $area="1 / 4 / 2 / 5" $noLine>墙柱垂直筋</RebarHeadCell>
            <RebarHeadCell $area="2 / 4 / 3 / 5">定尺</RebarHeadCell>
          </RebarHead>
          {rebar.map((r, i) => (
            <RebarRow key={i} $group={!!r.g}>
              <RebarNum>{i + 1}</RebarNum>
              {r.g ? (
                <RebarGroup><MinusBox />{r.g}</RebarGroup>
              ) : (
                <RebarChild $last={r.last}>{r.r}</RebarChild>
              )}
              <RebarCell>{r.c}</RebarCell>
              <RebarCell>{r.v}</RebarCell>
            </RebarRow>
          ))}
        </DialogBody>
        <DialogFoot>
          <Btn $primary>确定</Btn>
          <Btn>取消</Btn>
          <Grip width="10" height="10" viewBox="0 0 10 10" fill="#666">
            <rect x="7" y="1" width="2" height="2" />
            <rect x="4" y="4" width="2" height="2" />
            <rect x="7" y="4" width="2" height="2" />
            <rect x="1" y="7" width="2" height="2" />
            <rect x="4" y="7" width="2" height="2" />
            <rect x="7" y="7" width="2" height="2" />
          </Grip>
        </DialogFoot>
      </Dialog>
    </Page>
  </>
);

export default App;
